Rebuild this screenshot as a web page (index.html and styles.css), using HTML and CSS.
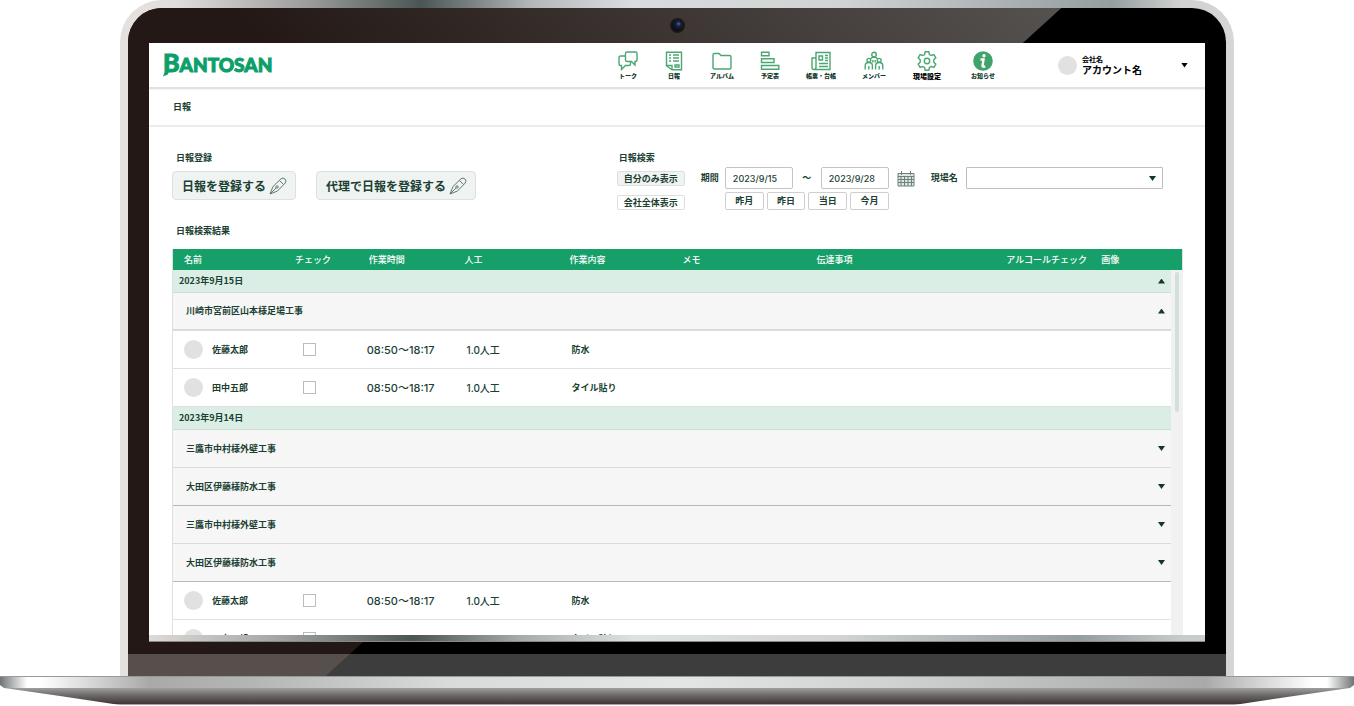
FILE: index.html
```html
<!DOCTYPE html>
<html lang="ja">
<head>
<meta charset="utf-8">
<title>BANTOSAN 日報</title>
<link rel="stylesheet" href="styles.css">
</head>
<body>
<div class="laptop">
  <div class="lid">
    <div class="bezel">
      <div class="bezel-top"><span class="camera"></span></div>
      <div class="screen">
        <div class="app">
          <header class="topbar">
            <a class="logo" href="#"><span class="logo-cap">B</span>ANTOSAN</a>
            <nav class="nav">
              <a class="nav-item" href="#">
                <svg class="icon" viewBox="0 0 20 20"><path d="M9 1h8.500q1.500 0 1.500 1.500V9q0 1.500-1.500 1.500H17V14l-3.500-3.500H9Q7.500 10.500 7.500 9V2.500Q7.500 1 9 1z"/><path d="M7.500 5H2.500Q1 5 1 6.500V13q0 1.500 1.500 1.500H3.500V18.500l4-4H11q1.500 0 1.500-1.500v-2.500"/></svg>
                <span>トーク</span></a>
              <a class="nav-item" href="#">
                <svg class="icon" viewBox="0 0 20 20"><path d="M2.500 1.200h15v17.500H8l-5.500-4z"/><path d="M2.500 14.500H8v4M5 4h2M9 4h6M5 7h2M9 7h6M5 10h2M9 10h6M11 14h4v2h-4z"/></svg>
                <span>日報</span></a>
              <a class="nav-item" href="#">
                <svg class="icon" viewBox="0 0 20 20"><path d="M1 16.500V4q0-1.500 1.500-1.500H7l2 2h8.500Q19 4.500 19 6v10.500q0 1.500-1.500 1.500h-15Q1 18 1 16.500z"/></svg>
                <span>アルバム</span></a>
              <a class="nav-item" href="#">
                <svg class="icon" viewBox="0 0 20 20"><path d="M1.500 1.200H9v3.600H1.500zM1.500 7.800H14v3.700H1.500zM1.500 14.500h17.300v3.800H1.500z"/></svg>
                <span>予定表</span></a>
              <a class="nav-item" href="#">
                <svg class="icon" viewBox="0 0 20 20"><path d="M5 1.500h14v17H3q-2 0-2-2V7h4zM5 7v9.500q0 2-2 2"/><path d="M8 5h3.500v4H8zM14 4.500h3M14 7h3M14 9.500h3M8 12.500h9M8 15.500h9"/></svg>
                <span>帳票・台帳</span></a>
              <a class="nav-item" href="#">
                <svg class="icon" viewBox="0 0 20 20"><circle cx="10" cy="3.600" r="2.300"/><circle cx="4.800" cy="9.300" r="1.900"/><circle cx="15.200" cy="9.300" r="1.900"/><path d="M6.500 7.800Q7.500 6.200 10 6.200t3.500 1.600M1.200 18.500v-3.500q0-3.500 3.600-3.500t3.600 3.500v3.500M4.800 15v3.500M11.600 18.500v-3.500q0-3.500 3.600-3.500t3.600 3.500v3.500M15.200 15v3.500M8.800 9v2.500M11.200 9v2.500"/></svg>
                <span>メンバー</span></a>
              <a class="nav-item nav-item-wide nav-item-active" href="#">
                <svg class="icon" viewBox="0 0 20 20"><path d="M8.200.8h3.600l.6 2.700 1.900 1 2.600-.8 1.900 3.100-2 1.900v2.600l2 1.900-1.900 3.100-2.600-.8-1.900 1-.6 2.700H8.200l-.6-2.700-1.900-1-2.600.8-1.900-3.100 2-1.900V8.700l-2-1.900 1.900-3.100 2.600.8 1.900-1z"/><circle cx="10" cy="10" r="2.700"/></svg>
                <span>現場設定</span></a>
              <a class="nav-item nav-item-wide" href="#">
                <svg class="icon" viewBox="0 0 20 20"><circle class="solid" cx="10" cy="10" r="9.800"/><circle class="knock" cx="11" cy="4.800" r="1.700"/><path class="knock-line" d="M7.500 8.500h3L9.500 15q0 1.200 2.800.3"/></svg>
                <span>お知らせ</span></a>
            </nav>
            <button class="account" type="button">
              <span class="avatar"></span>
              <span class="account-text"><span class="company">会社名</span><span class="user">アカウント名</span></span>
              <span class="caret caret-down"></span>
            </button>
          </header>
          <div class="crumb">日報</div>
          <main class="main">
            <div class="tools">
              <section class="register">
                <h2 class="title">日報登録</h2>
                <div class="register-row">
                  <button class="big-button" type="button">日報を登録する
                    <svg class="pen" viewBox="0 0 18 18"><path d="M1 17L4 9.500 12 1.800Q14 .2 16 2t.2 4L8.500 14zM1 17l6-6M10.500 3.500l4 4"/><circle cx="8" cy="10" r="1.200"/></svg></button>
                  <button class="big-button" type="button">代理で日報を登録する
                    <svg class="pen" viewBox="0 0 18 18"><path d="M1 17L4 9.500 12 1.800Q14 .2 16 2t.2 4L8.500 14zM1 17l6-6M10.500 3.500l4 4"/><circle cx="8" cy="10" r="1.200"/></svg></button>
                </div>
              </section>
              <section class="search">
                <h2 class="title">日報検索</h2>
                <div class="filters">
                  <div class="scope">
                    <button class="scope-button scope-on" type="button">自分のみ表示</button>
                    <button class="scope-button" type="button">会社全体表示</button>
                  </div>
                  <label class="field-label" for="from">期間</label>
                  <div class="period">
                    <div class="range">
                      <input class="date" id="from" type="text" value="2023/9/15">
                      <span>〜</span>
                      <input class="date" type="text" value="2023/9/28" aria-label="終了日">
                    </div>
                    <div class="presets">
                      <button class="preset" type="button">昨月</button>
                      <button class="preset" type="button">昨日</button>
                      <button class="preset" type="button">当日</button>
                      <button class="preset" type="button">今月</button>
                    </div>
                  </div>
                  <button class="calendar" type="button" aria-label="カレンダー">
                    <svg class="calendar-icon" viewBox="0 0 18 16"><path class="calendar-page" d="M1 2.500h16V15H1z"/><path d="M1 5.500h16M1 8.500h16M1 11.500h16M4 5.500V15M7.500 5.500V15M11 5.500V15M14.500 5.500V15M4.500 0v4M13.500 0v4"/></svg></button>
                  <label class="field-label" for="site">現場名</label>
                  <div class="select-wrap">
                    <select class="site" id="site"><option></option></select>
                    <span class="caret caret-down select-caret"></span>
                  </div>
                </div>
              </section>
            </div>
            <h2 class="title results-title">日報検索結果</h2>
            <div class="results">
              <table class="table">
                <colgroup><col class="c-name"><col class="c-check"><col class="c-time"><col class="c-man"><col class="c-work"><col class="c-memo"><col class="c-note"><col class="c-alc"><col class="c-img"></colgroup>
                <thead>
                  <tr><th>名前</th><th>チェック</th><th>作業時間</th><th>人工</th><th>作業内容</th><th>メモ</th><th>伝達事項</th><th>アルコールチェック</th><th>画像</th></tr>
                </thead>
                <tbody>
                  <tr class="day"><th colspan="9"><button class="toggle" type="button">2023年9月15日<span class="caret caret-up"></span></button></th></tr>
                  <tr class="job job-open"><th colspan="9"><button class="toggle" type="button">川崎市宮前区山本様足場工事<span class="caret caret-up"></span></button></th></tr>
                  <tr class="entry"><td><span class="person"><span class="avatar"></span>佐藤太郎</span></td><td class="check"><input type="checkbox" aria-label="佐藤太郎を確認"></td><td class="time">08:50〜18:17</td><td class="man">1.0人工</td><td class="work">防水</td><td></td><td></td><td></td><td></td></tr>
                  <tr class="entry"><td><span class="person"><span class="avatar"></span>田中五郎</span></td><td class="check"><input type="checkbox" aria-label="田中五郎を確認"></td><td class="time">08:50〜18:17</td><td class="man">1.0人工</td><td class="work">タイル貼り</td><td></td><td></td><td></td><td></td></tr>
                  <tr class="day"><th colspan="9">2023年9月14日</th></tr>
                  <tr class="job"><th colspan="9"><button class="toggle" type="button">三鷹市中村様外壁工事<span class="caret caret-down"></span></button></th></tr>
                  <tr class="job job-last"><th colspan="9"><button class="toggle" type="button">大田区伊藤様防水工事<span class="caret caret-down"></span></button></th></tr>
                  <tr class="job"><th colspan="9"><button class="toggle" type="button">三鷹市中村様外壁工事<span class="caret caret-down"></span></button></th></tr>
                  <tr class="job job-last"><th colspan="9"><button class="toggle" type="button">大田区伊藤様防水工事<span class="caret caret-down"></span></button></th></tr>
                  <tr class="entry"><td><span class="person"><span class="avatar"></span>佐藤太郎</span></td><td class="check"><input type="checkbox" aria-label="佐藤太郎を確認"></td><td class="time">08:50〜18:17</td><td class="man">1.0人工</td><td class="work">防水</td><td></td><td></td><td></td><td></td></tr>
                  <tr class="entry"><td><span class="person"><span class="avatar"></span>田中五郎</span></td><td class="check"><input type="checkbox" aria-label="田中五郎を確認"></td><td class="time">08:50〜18:17</td><td class="man">1.0人工</td><td class="work">タイル貼り</td><td></td><td></td><td></td><td class="end"><span class="caret caret-up"></span></td></tr>
                </tbody>
              </table>
              <div class="scrollbar"><div class="thumb"></div></div>
            </div>
          </main>
        </div>
        <div class="hinge"></div>
      </div>
      <div class="chin"></div>
    </div>
  </div>
  <div class="base"><div class="base-top"></div><div class="base-bottom"></div></div>
</div>
</body>
</html>
```
FILE: styles.css
```css
* { box-sizing: border-box; }

body {
  margin: 0;
  background: #fff;
  color: #1b3f33;
  font: 700 9px/12px "Noto Sans CJK JP", sans-serif;
}

button, input, select { margin: 0; font: inherit; color: inherit; }
button { padding: 0; border: 0; background: none; }
a { color: inherit; text-decoration: none; }
svg { display: block; fill: none; }

/* Laptop body */
.laptop { display: flex; flex-direction: column; height: 100vh; padding-bottom: 1px; overflow: hidden; }
.lid {
  flex: 1;
  min-height: 0;
  display: flex;
  margin: 0 120px;
  padding: 8px 8px 0;
  border-radius: 42px 42px 0 0;
  background: linear-gradient(90deg, #e5e1de 0, #e0dedc 5%, #9a9c9b 17%, #4b5553 27%, #b4b8b9 37%, #d9dddf 46%, #d0d2d3 65%, #949d9f 89%, #d0d0d0 95%, #d6d6d6 100%);
}
.bezel {
  position: relative;
  flex: 1;
  min-width: 0;
  display: flex;
  flex-direction: column;
  padding: 0 21px;
  border-radius: 34px 34px 0 0;
  background: #000;
  overflow: hidden;
}
.bezel::before {
  content: "";
  position: absolute;
  inset: 0;
  background: linear-gradient(50deg, #231815 40%, #575452 92%);
  clip-path: polygon(0 0, 85% 0, 18% 100%, 0 100%);
}
.bezel-top { position: relative; display: flex; align-items: center; justify-content: center; height: 35px; }
.camera {
  width: 15px;
  height: 15px;
  border: 2px solid #1c1716;
  border-radius: 50%;
  background: radial-gradient(circle at 60% 35%, #51678a 0, #14213f 25%, #080c18 75%);
}
.screen {
  position: relative;
  flex: 1;
  min-height: 0;
  display: flex;
  flex-direction: column;
  background: #fff;
}
.app { flex: 1; min-height: 0; overflow: hidden; }
.hinge {
  height: 7px;
  border-bottom: 1px solid #888;
  background: linear-gradient(90deg, #dedad7 0, #a5a7a6 12%, #4b5553 25%, #a5aaab 35%, #dfe2e3 46%, #d2d4d5 65%, #949d9f 88%, #c9cccc 98%);
}
.chin { position: relative; height: 34px; margin: 0 -21px; border-top: 12px solid transparent; background: rgba(255, 255, 255, .24); background-clip: padding-box; }

.base {
  position: relative;
  height: 29px;
  clip-path: polygon(0 0, 100% 0, 100% 9px, calc(100% - 4px) 12px, calc(100% - 60px) 20px, calc(100% - 120px) 100%, 120px 100%, 60px 20px, 4px 12px, 0 9px);
}
.base-top {
  height: 12px;
  border-top: 1px solid #999;
  background: linear-gradient(90deg, #6f7474 0, #fff 2%, #fff 3%, #a9a9a9 11%, #b5b6b6 19%, #d9dbda 33%, #e4e6e6 50%, #d0d2d1 66%, #b5b6b6 81%, #a9a9a9 89%, #fff 97%, #fff 98%, #6f7474 100%);
}
.base-bottom { height: 17px; border-bottom: 1px solid #a79fa1; background: linear-gradient(#a09e9e, #6d6969 45%, #403736); }

/* Top bar */
.topbar {
  display: flex;
  align-items: center;
  height: 46px;
  padding: 0 17px 0 14px;
  border-bottom: 2px solid #e2e2e2;
  box-shadow: 0 1px 1px #f4f4f4;
}
.logo { position: relative; margin-bottom: 4px; color: #0c9f6a; font: 900 19px/24px Lato, sans-serif; -webkit-text-stroke: 1px #0c9f6a; }
.logo-cap { font-size: 25px; }
.logo::before {
  content: "";
  position: absolute;
  left: 0;
  bottom: 0;
  width: 6px;
  height: 5px;
  background: #0c9f6a;
  clip-path: polygon(30% 0, 100% 0, 80% 60%, 0 100%);
}
.nav { display: flex; gap: 26px; margin-left: auto; }
.nav-item { display: flex; flex-direction: column; align-items: center; gap: 1px; color: #12382a; font-size: 6px; line-height: 8px; font-weight: 900; white-space: nowrap; }
.nav-item-wide { min-width: 30px; }
.nav-item-active { color: #000; font-size: 7px; }
.icon { width: 20px; height: 20px; stroke: #4aa772; stroke-width: 1.400; }
.solid { fill: #3fa36b; stroke: none; }
.knock { fill: #fff; stroke: none; }
.knock-line { stroke: #fff; stroke-width: 2.400; }
.account { display: flex; align-items: center; margin-left: 60px; color: #000; }
.avatar { flex: none; width: 19px; height: 19px; border-radius: 50%; background: #e1e1e1; }
.account-text { display: flex; flex-direction: column; align-items: flex-start; margin: 0 39px 0 5px; }
.company { font-size: 7px; line-height: 10px; }
.user { font-size: 10px; line-height: 12px; }
.caret { width: 7px; height: 5px; background: #12382a; }
.caret-down { clip-path: polygon(0 0, 100% 0, 50% 100%); }
.caret-up { clip-path: polygon(0 100%, 100% 100%, 50% 0); }
.account .caret { background: #000; }

.crumb { height: 38px; padding: 12px 24px; border-bottom: 2px solid #ececec; }

/* Registration and search */
.main { padding: 25px 22px 0 23px; }
.tools { display: grid; grid-template-columns: 44% 1fr; }
.title { margin: 0 4px; font-size: 9px; line-height: 12px; }
.register-row { display: flex; gap: 20px; margin-top: 7px; }
.big-button {
  display: flex;
  align-items: center;
  gap: 3px;
  height: 29px;
  padding: 0 8px 0 9px;
  border: 1px solid #dde0df;
  border-radius: 4px;
  background: #eff3f2;
  font-size: 12px;
  white-space: nowrap;
}
.pen { width: 18px; height: 18px; stroke: #5f7a70; stroke-width: 1; }
.search .title { margin: 0 2px; }
.filters { display: flex; align-items: flex-start; margin-top: 3px; }
.scope { display: flex; flex-direction: column; gap: 9px; margin-top: 4px; }
.scope-button { width: 68px; height: 15px; border: 1px solid #dedede; border-radius: 2px; line-height: 12px; white-space: nowrap; }
.scope-on { background: #eff3f2; }
.field-label { margin: 5px 6px 0 16px; white-space: nowrap; }
.period { display: flex; flex-direction: column; gap: 3px; width: 164px; }
.range { display: flex; align-items: center; justify-content: space-between; }
.date { width: 68px; height: 22px; padding: 0 7px; border: 1px solid #c4c4c4; border-radius: 2px; background: #fff; font-family: Inter, sans-serif; font-weight: 500; }
.presets { display: flex; gap: 3px; }
.preset { flex: 1; height: 18px; border: 1px solid #cfcfcf; border-radius: 2px; }
.calendar { margin: 4px 0 0 8px; }
.calendar-icon { width: 18px; height: 16px; stroke: #6b8279; }
.calendar-page { fill: #dfe6e3; }
.select-wrap { position: relative; flex: 1; margin-left: 2px; margin-right: 20px; }
.site { display: block; width: 100%; height: 22px; border: 1px solid #bdbdbd; border-radius: 1px; background: #fff; appearance: none; }
.select-caret { position: absolute; right: 7px; top: 9px; pointer-events: none; }

/* Results */
.results-title { margin-top: 15px; margin-bottom: 12px; }
.results { position: relative; }
.table { width: 100%; table-layout: fixed; border-spacing: 0; border-left: 1px solid #e0e0e0; border-right: 1px solid #e0e0e0; }
.table th, .table td { padding: 0 0 0 11px; text-align: left; white-space: nowrap; }
.c-name { width: 11%; }
.c-check { width: 7.300%; }
.c-time { width: 9.500%; }
.c-man { width: 10.400%; }
.c-work { width: 11.200%; }
.c-memo { width: 13.300%; }
.c-note { width: 18.800%; }
.c-alc { width: 9.400%; }
.table thead th { height: 21px; background: #179f6a; color: #fff; font-weight: 500; }
.table .day th { height: 23px; padding-left: 6px; border-bottom: 1px solid #ccddd5; background: #daeee5; }
.table .job th { height: 38px; padding-left: 13px; border-bottom: 1px solid #dadada; background: #f6f6f6; }
.table .job-open th { border-bottom-width: 2px; }
.table .job-last th { border-bottom-color: #b8b8b8; }
.toggle { display: flex; align-items: center; justify-content: space-between; width: 100%; padding-right: 17px; }
.entry td { height: 38px; border-bottom: 1px solid #e0e0e0; }
.person { display: flex; align-items: center; gap: 9px; }
.table .check { padding-left: 19px; }
.check input { display: block; appearance: none; width: 13px; height: 13px; margin: 0; border: 1px solid #bcbcbc; background: #fff; }
.table .time { padding-left: 9px; font: 500 11px/12px Inter, "Noto Sans CJK JP", sans-serif; }
.table .man { padding-left: 13px; font: 500 10px/12px Inter, "Noto Sans CJK JP", sans-serif; }
.table .work { padding-left: 13px; }
.end .caret { display: block; margin: 0 17px 0 auto; }
.scrollbar { position: absolute; top: 21px; right: 0; bottom: 18px; width: 12px; padding: 2px 4px; background: #f1f1f1; }
.thumb { width: 4px; height: 140px; border-radius: 2px; background: #cfe1d9; }
```
